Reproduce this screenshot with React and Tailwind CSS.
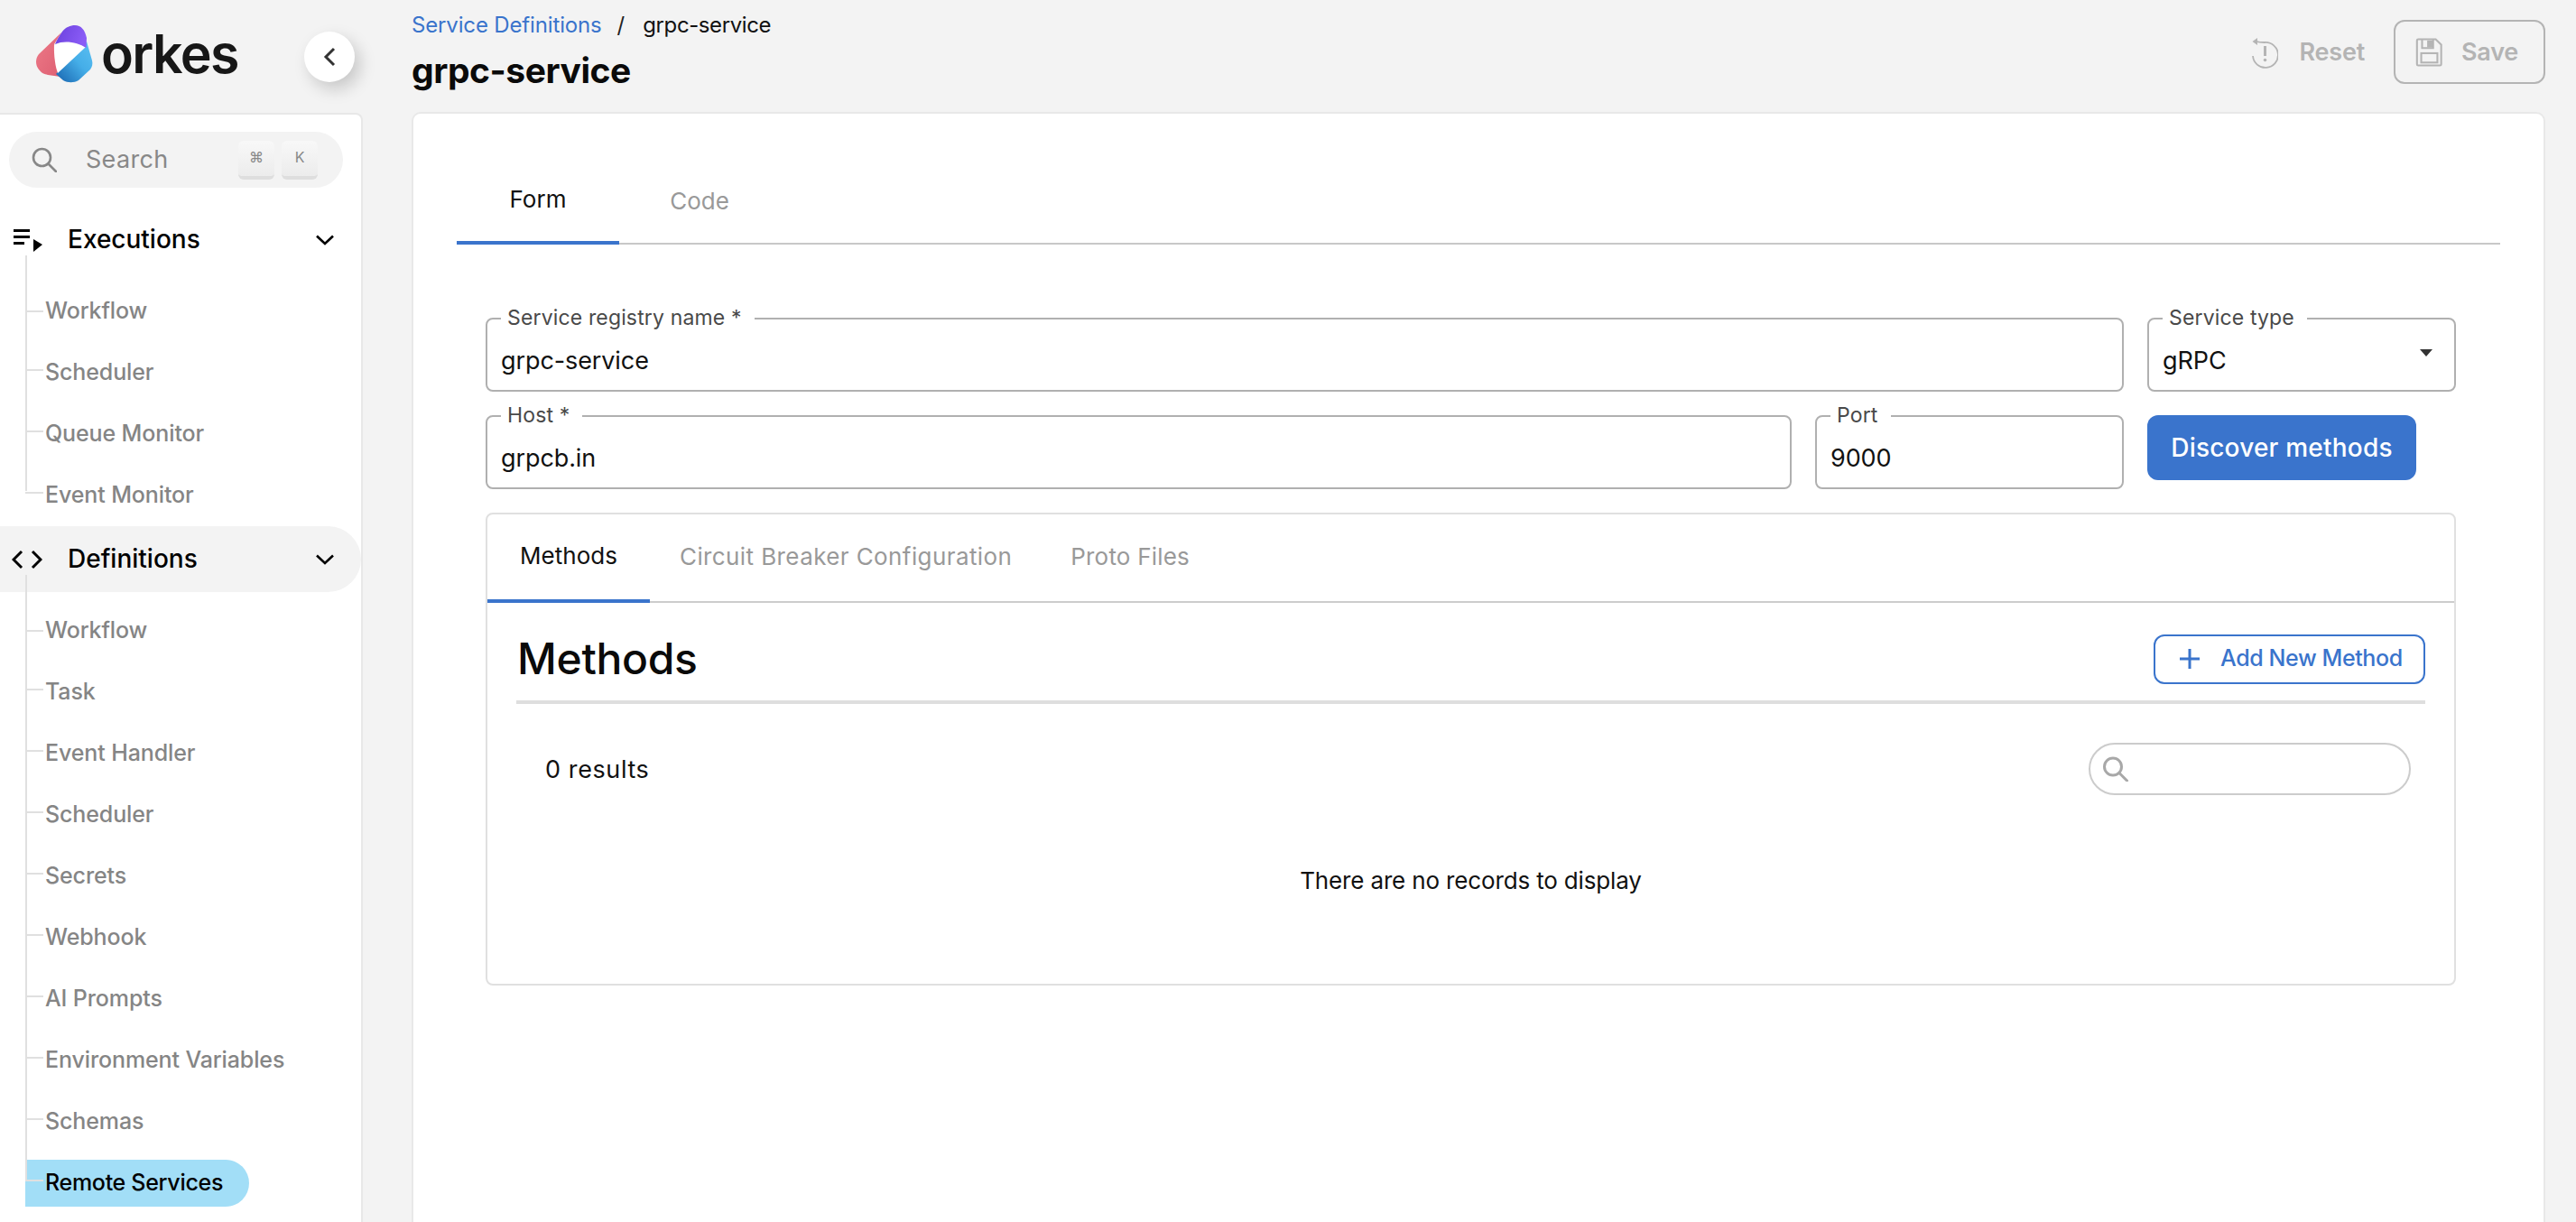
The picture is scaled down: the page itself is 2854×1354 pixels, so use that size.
import React from "react";

const F = { fontFamily: '"Inter", "Liberation Sans", sans-serif' };

function Logo() {
  return (
    <svg width="72" height="72" viewBox="0 0 72 72" className="-mt-[9px] shrink-0">
      <defs>
        <linearGradient id="lp" x1="0" y1="0" x2="1" y2="0.3">
          <stop offset="0" stopColor="#6a3fdc" />
          <stop offset="1" stopColor="#8a5cf6" />
        </linearGradient>
        <linearGradient id="lr" x1="0" y1="0" x2="1" y2="1">
          <stop offset="0" stopColor="#ee7a88" />
          <stop offset="1" stopColor="#dd5f72" />
        </linearGradient>
        <linearGradient id="lb" x1="0" y1="1" x2="1" y2="0">
          <stop offset="0" stopColor="#1763ae" />
          <stop offset="0.55" stopColor="#45aee8" />
          <stop offset="1" stopColor="#5cc0f2" />
        </linearGradient>
      </defs>
      <path d="M34 14 L9 38 C5 43 5 50 9 55 C12 59 15 60 19 61 L33 63 L26 27 Z" fill="url(#lr)" />
      <path d="M28 60 L62 24 L68 45 C69 49 68 52 66 55 L53 67 C48 70 41 70 36 67 Z" fill="url(#lb)" />
      <path d="M26 28 C26 28 25 45 30 59 L61 30 C50 24 36 22 26 28 Z" fill="#ffffff" />
      <path d="M27 27 C29 22 32 17 35 13 C39 8 44 6 49 6 C56 6 60 11 62 20 L61.5 31 C52 25 38 22 27 27 Z" fill="url(#lp)" />
    </svg>
  );
}

function SearchIcon({ className, sw = 2.6 }) {
  return (
    <svg viewBox="0 0 28 28" className={className} fill="none" stroke="currentColor" strokeWidth={sw} strokeLinecap="round">
      <circle cx="11.5" cy="11.5" r="9.5" />
      <path d="M18.5 18.5 L27 27" />
    </svg>
  );
}

function Chevron() {
  return (
    <svg width="20" height="12" viewBox="0 0 20 12" fill="none" stroke="#000" strokeWidth="2.6" className="shrink-0">
      <path d="M1 1.5 L10 10 L19 1.5" />
    </svg>
  );
}

function KeyCap({ children }) {
  return (
    <div className="flex h-[43px] w-[40px] items-center justify-center rounded-[6px] border-b-[4px] border-[#dedede] bg-gradient-to-b from-[#f8f8f8] to-[#ececec] pb-[2px] text-[16px] text-[#888]">
      {children}
    </div>
  );
}

function NavHeader({ icon, label, active }) {
  return (
    <div className={`flex h-[73px] shrink-0 items-center rounded-r-full pr-[30px] ${active ? "bg-[#f3f3f3]" : ""}`}>
      <div className="flex w-[75px] shrink-0 justify-start pl-[13px]">{icon}</div>
      <div className="flex-1 pb-[2px] text-[28px] font-medium text-black">{label}</div>
      <Chevron />
    </div>
  );
}

function NavItem({ label, active, first }) {
  return (
    <div className="relative ml-[28px] flex h-[68px] shrink-0 items-center">
      {active ? (
        <div className="flex h-[52px] w-[248px] items-center rounded-r-full bg-[#a2def7] pl-[22px] text-[25px] font-medium tracking-[-0.3px] text-black">
          {label}
        </div>
      ) : (
        <div className="pl-[22px] text-[25px] font-medium tracking-[-0.12px] text-[#858585]">{label}</div>
      )}
      <span className={`absolute left-0 h-[2px] w-[20px] bg-[#e0e0e0] ${first ? "top-[33px]" : "top-[30px]"}`} />
    </div>
  );
}

function Tree({ items, active, lineBottom }) {
  return (
    <div className="relative -mt-[19px] flex shrink-0 flex-col pt-[28px]">
      <span className={`absolute left-[28px] top-0 z-10 w-[2px] bg-[#e0e0e0] ${lineBottom}`} />
      {items.map((t, i) => (
        <NavItem key={t + i} label={t} active={t === active} first={i === 0} />
      ))}
    </div>
  );
}

function Sidebar() {
  return (
    <div className="flex h-full w-[402px] shrink-0 flex-col">
      <div className="flex h-[125px] shrink-0 items-center justify-between pl-[34px] pr-[9px]">
        <div className="flex items-center gap-[6px]">
          <Logo />
          <span className="-mt-[6px] text-[59px] font-semibold leading-none tracking-[-1.6px] text-[#171717]">orkes</span>
        </div>
        <div className="flex h-[56px] w-[56px] items-center justify-center rounded-full bg-white shadow-[6px_8px_18px_rgba(0,0,0,0.18)]">
          <svg width="14" height="22" viewBox="0 0 14 22" fill="none" stroke="#333" strokeWidth="3">
            <path d="M12 2 L3 11 L12 20" />
          </svg>
        </div>
      </div>
      <div className="flex min-h-0 flex-1 flex-col overflow-hidden rounded-tr-[8px] border-r-2 border-t-2 border-[#e8e8e8] bg-white">
        <div className="mx-[10px] mb-[21px] mt-[19px] flex h-[62px] w-[370px] shrink-0 items-center rounded-full bg-[#f3f3f3] pl-[25px] pr-[28px]">
          <SearchIcon className="h-[28px] w-[28px] text-[#888]" />
          <span className="ml-[32px] flex-1 text-[27px] tracking-[0.3px] text-[#888]">Search</span>
          <div className="flex gap-[8px]">
            <KeyCap>⌘</KeyCap>
            <KeyCap>K</KeyCap>
          </div>
        </div>
        <NavHeader
          label="Executions"
          icon={
            <svg width="34" height="26" viewBox="0 0 34 26" className="ml-[2px]">
              <path d="M0 1h18v3H0zM0 8h18v3H0zM0 15h12v3H0z" fill="#000" />
              <path d="M22 12 L32 18 L22 26Z" fill="#000" />
            </svg>
          }
        />
        <Tree items={["Workflow", "Scheduler", "Queue Monitor", "Event Monitor"]} lineBottom="bottom-[39px]" />
        <NavHeader
          active
          label="Definitions"
          icon={
            <svg width="34" height="22" viewBox="0 0 34 22" fill="none" stroke="#000" strokeWidth="3">
              <path d="M11 2 L2 11 L11 20 M23 2 L32 11 L23 20" />
            </svg>
          }
        />
        <Tree
          items={["Workflow", "Task", "Event Handler", "Scheduler", "Secrets", "Webhook", "AI Prompts", "Environment Variables", "Schemas", "Remote Services"]}
          active="Remote Services"
          lineBottom="bottom-[37px]"
        />
      </div>
    </div>
  );
}

function Field({ label, value, className = "", select }) {
  return (
    <fieldset className={`relative h-[82px] min-w-0 rounded-[8px] border-2 border-[#b0b0b0] pl-[15px] ${className}`}>
      <legend className="h-[2px] pl-[7px] pr-[14px] text-[23px] leading-[0px] tracking-[0.15px] text-[#494949]">{label}</legend>
      <div className="pt-[28px] text-[27px] leading-[36px] tracking-[-0.1px] text-[#111]">{value}</div>
      {select && <span className="absolute right-[24px] top-[33px] h-0 w-0 border-x-[7px] border-t-[8px] border-x-transparent border-t-[#333]" />}
    </fieldset>
  );
}

function Main() {
  return (
    <div className="flex h-full min-w-0 flex-1 flex-col pl-[54px] pr-[34px]">
      <div className="flex h-[124px] shrink-0 items-start justify-between">
        <div className="pt-[14px]">
          <div className="flex items-center text-[24px] leading-[28px]">
            <span className="tracking-[-0.15px] text-[#3a74cc]">Service Definitions</span>
            <span className="ml-[17px] mr-[20px] text-[#222]">/</span>
            <span className="tracking-[-0.4px] text-[#111]">grpc-service</span>
          </div>
          <div className="mt-[12px] text-[39px] font-bold leading-[48px] tracking-[-0.45px] text-[#0a0a0a]">grpc-service</div>
        </div>
        <div className="flex items-center pt-[22px] text-[27px] font-semibold tracking-[-0.2px] text-[#b4b4b4]">
          <svg width="29" height="34" viewBox="0 0 29 34" fill="none" stroke="#b4b4b4" strokeWidth="1.8" className="mr-[23px] mt-[3px]">
            <path d="M6 4 C7 4.6 10 5 14 5 A14 14 0 1 1 1 20" />
            <path d="M0.5 4 L6 0 L6 8 Z" fill="#b4b4b4" stroke="none" />
            <path d="M14.5 9 V20" strokeWidth="3" />
            <circle cx="14.5" cy="24.5" r="1.8" fill="#b4b4b4" stroke="none" />
          </svg>
          <span className="mr-[32px] pt-[2px]">Reset</span>
          <div className="flex h-[71px] w-[168px] items-center rounded-[12px] border-2 border-[#b4b4b4] pl-[21px]">
            <svg width="32" height="32" viewBox="0 0 32 34" fill="none" stroke="#b4b4b4" strokeWidth="2.2" className="mr-[20px]">
              <path d="M2 3 a1.5 1.5 0 0 1 1.5-1.5 H24 L30.5 8 V31 a1.5 1.5 0 0 1-1.5 1.5 H3.5 A1.5 1.5 0 0 1 2 31 Z" />
              <path d="M8 2 V12 H21 V2" />
              <rect x="14" y="3" width="7" height="8" fill="#b4b4b4" stroke="none" />
              <rect x="7" y="18" width="19" height="11" />
            </svg>
            <span className="pt-[2px]">Save</span>
          </div>
        </div>
      </div>
      <div className="flex min-h-0 flex-1 flex-col rounded-t-[10px] border-x-2 border-t-2 border-[#e8e8e8] bg-white px-[48px]">
        <div className="mt-[80px] flex h-[65px] shrink-0 border-b-2 border-[#c8c8c8]">
          <div className="-mb-[2px] flex h-[65px] w-[180px] items-center justify-center border-b-4 border-[#3a74cc] pb-[32px] text-[26px] text-[#111]">Form</div>
          <div className="flex w-[178px] items-center justify-center pb-[30px] text-[26px] text-[#999]">Code</div>
        </div>
        <div className="ml-[32px] mr-[49px] mt-[81px] flex flex-col">
          <div className="flex gap-[26px]">
            <Field label="Service registry name *" value="grpc-service" className="flex-1" />
            <Field label="Service type" value="gRPC" className="w-[342px] shrink-0 pl-[12px]" select />
          </div>
          <div className="mt-[26px] flex gap-[26px]">
            <Field label="Host *" value="grpcb.in" className="flex-1" />
            <Field label="Port" value="9000" className="w-[342px] shrink-0" />
            <div className="flex w-[342px] shrink-0 items-start">
              <div className="flex h-[72px] w-[298px] items-center justify-center rounded-[12px] bg-[#3a74cc] text-[28px] font-medium tracking-[0.2px] text-white">Discover methods</div>
            </div>
          </div>
          <div className="mt-[26px] flex h-[524px] flex-col rounded-[8px] border-2 border-[#e0e0e0]">
            <div className="flex h-[98px] shrink-0 border-b-2 border-[#cccccc]">
              <div className="-mb-[2px] flex h-[98px] w-[180px] items-center justify-center border-b-4 border-[#3a74cc] pb-[3px] text-[26px] text-[#111]">Methods</div>
              <div className="ml-[33px] flex items-center pb-[3px] text-[26px] tracking-[0.4px] text-[#999]">Circuit Breaker Configuration</div>
              <div className="ml-[65px] flex items-center pb-[3px] text-[26px] tracking-[0.2px] text-[#999]">Proto Files</div>
            </div>
            <div className="mx-[32px] flex h-[112px] shrink-0 items-center justify-between border-b-4 border-[#dedede] pt-[16px]">
              <div className="pl-[1px] text-[48px] font-medium leading-none tracking-[-0.3px] text-[#0a0a0a]">Methods</div>
              <div className="flex h-[55px] w-[301px] items-center rounded-[12px] border-2 border-[#3a74cc] pl-[26px] text-[25px] font-medium tracking-[-0.4px] text-[#3a74cc]">
                <svg width="24" height="24" viewBox="0 0 24 24" stroke="#3a74cc" strokeWidth="3" className="mr-[22px]">
                  <path d="M12 1 V23 M1 12 H23" />
                </svg>
                Add New Method
              </div>
            </div>
            <div className="mt-[43px] flex h-[58px] shrink-0 items-center justify-between pl-[64px] pr-[48px]">
              <span className="pt-[2px] text-[27px] tracking-[0.6px] text-[#111]">0 results</span>
              <div className="flex h-[58px] w-[357px] items-center rounded-full border-2 border-[#cccccc] pl-[13px]">
                <SearchIcon className="h-[28px] w-[29px] text-[#a8a8a8]" sw={3} />
              </div>
            </div>
            <div className="mt-[77px] text-center text-[26px] leading-[36px] tracking-[-0.15px] text-[#111]">There are no records to display</div>
          </div>
        </div>
      </div>
    </div>
  );
}

export default function App() {
  return (
    <div className="flex h-screen w-full overflow-hidden bg-[#f3f3f3]" style={F}>
      <Sidebar />
      <Main />
    </div>
  );
}
